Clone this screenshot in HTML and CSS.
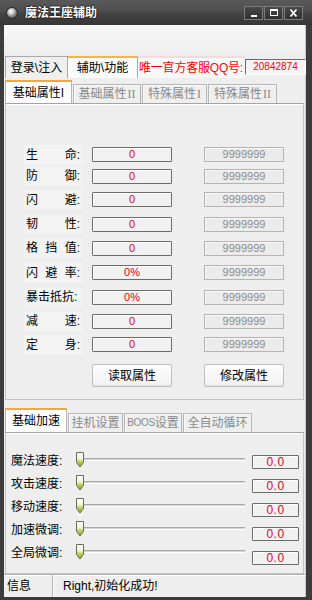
FILE: index.html
```html
<!DOCTYPE html>
<html lang="zh">
<head>
<meta charset="utf-8">
<title>魔法王座辅助</title>
<link rel="stylesheet" href="styles.css">
</head>
<body>
<div class="window">
  <div class="titlebar">
    <span class="app-icon"></span>
    <span class="title">魔法王座辅助</span>
    <div class="wbtns">
      <span class="wbtn"><svg width="19" height="14" viewBox="0 0 19 14"><rect x="7" y="9" width="6" height="2" fill="#fff"/></svg></span>
      <span class="wbtn"><svg width="19" height="14" viewBox="0 0 19 14"><rect x="6.5" y="3.5" width="7" height="6" fill="none" stroke="#fff" stroke-width="1"/><rect x="6" y="3" width="8" height="2" fill="#fff"/></svg></span>
      <span class="wbtn"><svg width="19" height="14" viewBox="0 0 19 14"><path d="M6.5 3.5 L12.5 10.5 M12.5 3.5 L6.5 10.5" stroke="#fff" stroke-width="1.8" fill="none"/></svg></span>
    </div>
  </div>

  <div class="client">
    <div class="toprow">
      <div class="ttab">登录\注入</div>
      <div class="ttab active">辅助\功能</div>
      <div class="qq-label">唯一官方客服QQ号:</div>
      <div class="qq-box">20842874</div>
    </div>

    <div class="tabs">
      <div class="tab active w67">基础属性I</div>
      <div class="tab w68">基础属性<span class="roman">II</span></div>
      <div class="tab w65">特殊属性<span class="roman">I</span></div>
      <div class="tab w69">特殊属性<span class="roman">II</span></div>
    </div>

    <div class="panel attrs">
      <div class="attr-row"><div class="lbl"><span>生</span><span>命:</span></div><div class="val">0</div><div class="max">9999999</div></div>
      <div class="attr-row"><div class="lbl"><span>防</span><span>御:</span></div><div class="val">0</div><div class="max">9999999</div></div>
      <div class="attr-row"><div class="lbl"><span>闪</span><span>避:</span></div><div class="val">0</div><div class="max">9999999</div></div>
      <div class="attr-row"><div class="lbl"><span>韧</span><span>性:</span></div><div class="val">0</div><div class="max">9999999</div></div>
      <div class="attr-row"><div class="lbl"><span>格</span><span>挡</span><span>值:</span></div><div class="val">0</div><div class="max">9999999</div></div>
      <div class="attr-row"><div class="lbl"><span>闪</span><span>避</span><span>率:</span></div><div class="val">0%</div><div class="max">9999999</div></div>
      <div class="attr-row"><div class="lbl"><span>暴击抵抗:</span></div><div class="val">0%</div><div class="max">9999999</div></div>
      <div class="attr-row"><div class="lbl"><span>减</span><span>速:</span></div><div class="val">0</div><div class="max">9999999</div></div>
      <div class="attr-row"><div class="lbl"><span>定</span><span>身:</span></div><div class="val">0</div><div class="max">9999999</div></div>
      <div class="btn-row">
        <button class="btn">读取属性</button>
        <button class="btn">修改属性</button>
      </div>
    </div>

    <div class="tabs tabs2">
      <div class="tab active w62">基础加速</div>
      <div class="tab w55">挂机设置</div>
      <div class="tab w58"><span class="small">BOOS</span>设置</div>
      <div class="tab w69">全自动循环</div>
    </div>

    <div class="panel speeds">
      <div class="speed-rows">
        <div class="speed-row"><span class="slbl">魔法速度:</span><div class="slider"><div class="track"></div><svg class="thumb" width="8" height="16" viewBox="0 0 8 16"><defs><linearGradient id="tg" x1="0" y1="0" x2="0" y2="1"><stop offset="0" stop-color="#ffffff"/><stop offset="0.45" stop-color="#eef0d8"/><stop offset="0.6" stop-color="#c4d060"/><stop offset="1" stop-color="#8ea030"/></linearGradient></defs><path d="M0.5 0.5 H7.5 V10.5 L4 15 L0.5 10.5 Z" fill="url(#tg)" stroke="#6b6b55"/></svg></div></div>
        <div class="speed-row"><span class="slbl">攻击速度:</span><div class="slider"><div class="track"></div><svg class="thumb" width="8" height="16" viewBox="0 0 8 16"><path d="M0.5 0.5 H7.5 V10.5 L4 15 L0.5 10.5 Z" fill="url(#tg)" stroke="#6b6b55"/></svg></div></div>
        <div class="speed-row"><span class="slbl">移动速度:</span><div class="slider"><div class="track"></div><svg class="thumb" width="8" height="16" viewBox="0 0 8 16"><path d="M0.5 0.5 H7.5 V10.5 L4 15 L0.5 10.5 Z" fill="url(#tg)" stroke="#6b6b55"/></svg></div></div>
        <div class="speed-row"><span class="slbl">加速微调:</span><div class="slider"><div class="track"></div><svg class="thumb" width="8" height="16" viewBox="0 0 8 16"><path d="M0.5 0.5 H7.5 V10.5 L4 15 L0.5 10.5 Z" fill="url(#tg)" stroke="#6b6b55"/></svg></div></div>
        <div class="speed-row"><span class="slbl">全局微调:</span><div class="slider"><div class="track"></div><svg class="thumb" width="8" height="16" viewBox="0 0 8 16"><path d="M0.5 0.5 H7.5 V10.5 L4 15 L0.5 10.5 Z" fill="url(#tg)" stroke="#6b6b55"/></svg></div></div>
      </div>
      <div class="speed-vals">
        <div class="sval">0.0</div>
        <div class="sval">0.0</div>
        <div class="sval">0.0</div>
        <div class="sval">0.0</div>
        <div class="sval">0.0</div>
      </div>
    </div>

    <div class="status">
      <div class="st-cell">信息</div>
      <div class="st-msg">Right,初始化成功!</div>
    </div>
  </div>
</div>
</body>
</html>
```

FILE: styles.css
```css
* { box-sizing: border-box; }
html, body { margin: 0; padding: 0; }
body {
  width: 312px;
  height: 600px;
  overflow: hidden;
  background: #3a3a3a;
  font-family: "Liberation Sans", "Noto Sans CJK SC", sans-serif;
  font-size: 12px;
  color: #000;
}
.window {
  width: 312px;
  height: 600px;
  display: flex;
  flex-direction: column;
  background: #3c3c3c;
}

/* title bar */
.titlebar {
  height: 25px;
  flex: none;
  display: flex;
  align-items: center;
  padding-left: 7px;
  padding-right: 9px;
  background: linear-gradient(#5a5a5a, #4d4d4d 45%, #414141 60%, #363636 100%);
}
.app-icon {
  width: 10px;
  height: 10px;
  border-radius: 50%;
  background: radial-gradient(circle at 40% 35%, #ffffff 0, #d8d8d8 25%, #7a7a7a 60%, #3a3a3a 100%);
  box-shadow: 0 0 0 1px #2a2a2a;
}
.title {
  margin-left: 8px;
  color: #fff;
  font-weight: bold;
  font-size: 12px;
  line-height: 14px;
  text-shadow: 0 0 2px #000, 0 0 1px #000;
}
.wbtns {
  margin-left: auto;
  display: flex;
  gap: 1px;
}
.wbtn {
  width: 19px;
  height: 14px;
  display: block;
  background: linear-gradient(#4a4a4a, #2e2e2e);
  outline: 1px solid #7c7c7c;
  outline-offset: -1px;
}
.wbtn svg { display: block; }

/* client */
.client {
  flex: 1;
  margin: 0 6px 3px 4px;
  background: linear-gradient(#f7f7f7, #eeeeee 30px);
  display: flex;
  flex-direction: column;
  box-shadow: inset -1px 0 0 #c8c8c8;
}

.toprow {
  display: flex;
  height: 22px;
  margin: 31px 0 0 1px;
}
.ttab {
  width: 63px;
  border: 1px solid #a9a9a9;
  border-bottom: none;
  background: #efefef;
  display: flex;
  align-items: center;
  justify-content: center;
  line-height: 14px;
  font-size: 12px;
  white-space: nowrap;
}
.ttab.active {
  width: 70px;
  background: #fbfbfb;
  border-top: 2px solid #f2b548;
  border-left: none;
}
.qq-label {
  width: 107px;
  background: #f8f8f8;
  color: #f00;
  display: flex;
  align-items: center;
  padding-left: 1px;
  line-height: 14px;
  white-space: nowrap;
  overflow: hidden;
  letter-spacing: -0.2px;
  border-top: 2px solid #f0dcdc;
}
.qq-box {
  width: 61px;
  height: 16px;
  align-self: center;
  border: 1px solid;
  border-color: #6a6a6a #ffffff #ffffff #6a6a6a;
  background: #f4f4f4;
  color: #f00;
  font-size: 10px;
  line-height: 14px;
  text-align: center;
}

/* tabs */
.tabs {
  display: flex;
  align-items: flex-end;
  gap: 1px;
  height: 23px;
  margin: 2px 0 0 1px;
}
.tab {
  height: 19px;
  border: 1px solid #b6b6b6;
  border-bottom: none;
  background: #efefef;
  color: #8a8a8a;
  display: flex;
  align-items: center;
  justify-content: center;
  line-height: 14px;
  white-space: nowrap;
  box-shadow: inset 1px 1px 0 #fafafa;
}
.tab.active {
  height: 23px;
  background: #ffffff;
  color: #000;
  border-top: 2px solid #f2a83c;
  box-shadow: none;
}
.roman {
  font-family: "Liberation Serif", serif;
  font-size: 12px;
  margin-left: 1px;
}
.small {
  font-size: 10px;
  letter-spacing: -0.3px;
}
.w55 { width: 55px; }
.w58 { width: 58px; }
.w62 { width: 62px; }
.w65 { width: 65px; }
.w67 { width: 67px; }
.w68 { width: 68px; }
.w69 { width: 69px; }

.tabs2 {
  height: 24px;
  margin-top: 8px;
}
.tabs2 .tab.active { height: 24px; }

/* panels */
.panel {
  margin-left: 1px;
  width: 299px;
  border: 1px solid #c4c4c4;
  border-top-color: #a4a4a4;
  box-shadow: inset 0 1px 0 #ffffff;
}
.attrs {
  height: 297px;
  padding-top: 40px;
}
.attr-row {
  display: flex;
  align-items: center;
  height: 24px;
}
.attr-row:nth-child(1) { height: 21px; }
.attr-row:nth-child(2) { height: 22px; }
.attr-row:nth-child(3) { height: 25px; }
.attr-row:nth-child(6) { height: 25px; }
.attr-row:nth-child(9) { height: 23px; }

.lbl {
  width: 58px;
  height: 19px;
  margin-left: 18px;
  padding: 0 2px;
  display: flex;
  justify-content: space-between;
  align-items: center;
  background: #f3f3f3;
  line-height: 14px;
  font-size: 12px;
  white-space: nowrap;
}
.val, .max {
  width: 80px;
  height: 15px;
  font-size: 11px;
  line-height: 13px;
  text-align: center;
}
.val {
  margin-left: 10px;
  border: 1px solid #6c6c6c;
  border-radius: 1px;
  background: #f1f1f1;
  box-shadow: inset 1px 1px 0 #ffffff;
  color: #e4001a;
}
.max {
  margin-left: 32px;
  border: 1px solid #b4b4b4;
  background: #ebebeb;
  box-shadow: inset 1px 1px 0 #f8f8f8;
  color: #8c8c8c;
}
.btn-row {
  display: flex;
  gap: 32px;
  margin-top: 8px;
  padding-left: 86px;
}
.btn {
  width: 80px;
  height: 23px;
  padding: 0;
  border: 1px solid #c0c0c0;
  border-radius: 2px;
  background: linear-gradient(#fdfdfd, #f1f1f1);
  box-shadow: inset 0 -1px 0 #e0e0e0;
  font-family: "Liberation Sans", "Noto Sans CJK SC", sans-serif;
  font-size: 12px;
  line-height: 14px;
  color: #000;
}

/* speeds */
.speeds {
  height: 142px;
  display: flex;
}
.speed-rows {
  padding-top: 16px;
}
.speed-row {
  height: 23px;
  display: flex;
  align-items: center;
  padding-left: 5px;
}
.slbl {
  width: 61px;
  line-height: 14px;
  font-size: 12px;
  white-space: nowrap;
}
.slider {
  position: relative;
  width: 174px;
  height: 23px;
  display: flex;
  align-items: center;
}
.track {
  margin-left: 8px;
  margin-top: -3px;
  width: 165px;
  height: 3px;
  border-top: 1px solid #a8a8a8;
  border-bottom: 1px solid #ffffff;
  background: #d4d4d4;
}
.thumb {
  position: absolute;
  left: 4px;
  top: 3px;
}
.speed-vals {
  margin-left: auto;
  margin-right: 4px;
  padding-top: 22px;
  display: flex;
  flex-direction: column;
  gap: 10px;
}
.sval {
  width: 47px;
  height: 14px;
  border: 1px solid #6c6c6c;
  border-radius: 1px;
  background: #f1f1f1;
  box-shadow: inset 1px 1px 0 #ffffff;
  color: #e4001a;
  font-size: 12px;
  line-height: 12px;
  text-align: center;
  letter-spacing: 0.5px;
}

/* status */
.status {
  flex: 1;
  display: flex;
  align-items: stretch;
  border-top: 1px solid #b0b0b0;
  box-shadow: inset 0 1px 0 #ffffff;
}
.st-cell {
  width: 49px;
  padding-left: 3px;
  display: flex;
  align-items: center;
  border-right: 1px solid #b4b4b4;
  box-shadow: 1px 0 0 #ffffff;
  line-height: 14px;
}
.st-msg {
  padding-left: 10px;
  display: flex;
  align-items: center;
  line-height: 14px;
}
```
